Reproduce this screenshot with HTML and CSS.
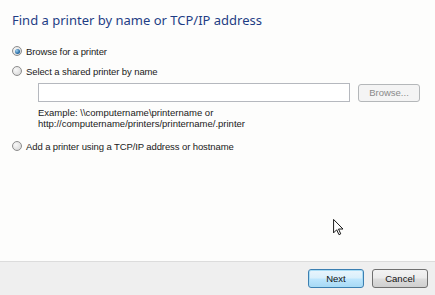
FILE: index.html
```html
<!DOCTYPE html>
<html>
<head>
<meta charset="utf-8">
<link rel="stylesheet" href="styles.css">
</head>
<body>
<div class="wizard">
  <main class="content">
    <h1 class="title">Find a printer by name or TCP/IP address</h1>
    <div class="options">
      <label class="opt"><span class="radio checked"></span><span>Browse for a printer</span></label>
      <label class="opt opt-gap"><span class="radio"></span><span>Select a shared printer by name</span></label>
      <div class="shared">
        <div class="shared-row">
          <div class="textbox"></div>
          <button class="btn btn-disabled" disabled>Browse...</button>
        </div>
        <p class="example">Example: \\computername\printername or<br>http://computername/printers/printername/.printer</p>
      </div>
      <label class="opt"><span class="radio"></span><span>Add a printer using a TCP/IP address or hostname</span></label>
    </div>
    <svg class="cursor" width="11" height="17" viewBox="0 0 12 19">
      <path d="M0.5 0.5 L0.5 15.5 L4 12 L6.5 17.5 L8.5 16.6 L6 11.2 L11 11.2 Z" fill="#fff" stroke="#000" stroke-width="1" stroke-linejoin="miter"/>
    </svg>
  </main>
  <footer class="footer">
    <button class="btn btn-default">Next</button>
    <button class="btn">Cancel</button>
  </footer>
</div>
</body>
</html>
```

FILE: styles.css
```css
html, body {
  margin: 0;
  padding: 0;
}
body {
  width: 435px;
  height: 295px;
  overflow: hidden;
  background: #fdfdfc;
  font-family: "Liberation Sans", Arial, sans-serif;
  font-size: 9.5px;
  color: #1a1a1a;
}
.wizard {
  display: flex;
  flex-direction: column;
  height: 295px;
}
.content {
  position: relative;
  flex: 1;
  padding: 10px 0 0 12px;
}
.title {
  margin: 0;
  font-family: "Noto Sans", "Open Sans", sans-serif;
  font-weight: normal;
  font-size: 13px;
  line-height: 20px;
  color: #1f3d85;
}
.options {
  display: flex;
  flex-direction: column;
  margin-top: 15px;
}
.opt {
  display: flex;
  align-items: center;
  gap: 4px;
  height: 12px;
  letter-spacing: -0.1px;
}
.opt-gap {
  margin-top: 8px;
}
.radio {
  box-sizing: border-box;
  width: 10px;
  height: 10px;
  border-radius: 50%;
  border: 1px solid #8d8d8d;
  background: radial-gradient(circle at 35% 35%, #f8f8f8 0%, #e2e2e2 60%, #cfcfcf 100%);
  display: flex;
  align-items: center;
  justify-content: center;
}
.radio.checked::after {
  content: "";
  width: 5px;
  height: 5px;
  border-radius: 50%;
  background: radial-gradient(circle at 35% 35%, #9fd0ef 0%, #2a6fa8 60%, #1a4d80 100%);
}
.shared {
  padding-left: 26px;
  padding-top: 6px;
}
.shared-row {
  display: flex;
  align-items: center;
  gap: 8px;
}
.textbox {
  box-sizing: border-box;
  width: 312px;
  height: 19px;
  border: 1px solid #b5b8be;
  background: #fff;
}
.btn {
  box-sizing: border-box;
  width: 56px;
  height: 19px;
  padding: 0;
  border: 1px solid #707070;
  border-radius: 3px;
  background: linear-gradient(#f3f3f3 0%, #ebebeb 48%, #dddddd 52%, #cfcfcf 100%);
  font-family: "Liberation Sans", Arial, sans-serif;
  font-size: 9.5px;
  color: #111;
}
.btn-disabled {
  width: 62px;
  height: 18px;
  border-color: #b4b7b9;
  background: #f4f4f4;
  color: #8a8a8a;
}
.btn-default {
  border-color: #3c7fb1;
  box-shadow: inset 0 0 0 1px #a8dcf5;
  background: linear-gradient(#e9f5fc 0%, #d9effb 48%, #bee6fd 52%, #a7d9f5 100%);
}
.example {
  margin: 6px 0 11px 0;
  line-height: 10.5px;
  color: #1a1a1a;
}
.cursor {
  position: absolute;
  left: 333px;
  top: 219px;
}
.footer {
  box-sizing: border-box;
  height: 34px;
  border-top: 1px solid #dcdcdc;
  background: #efefef;
  display: flex;
  justify-content: flex-end;
  align-items: flex-start;
  gap: 8px;
  padding: 7px 7px 0 0;
}
```
